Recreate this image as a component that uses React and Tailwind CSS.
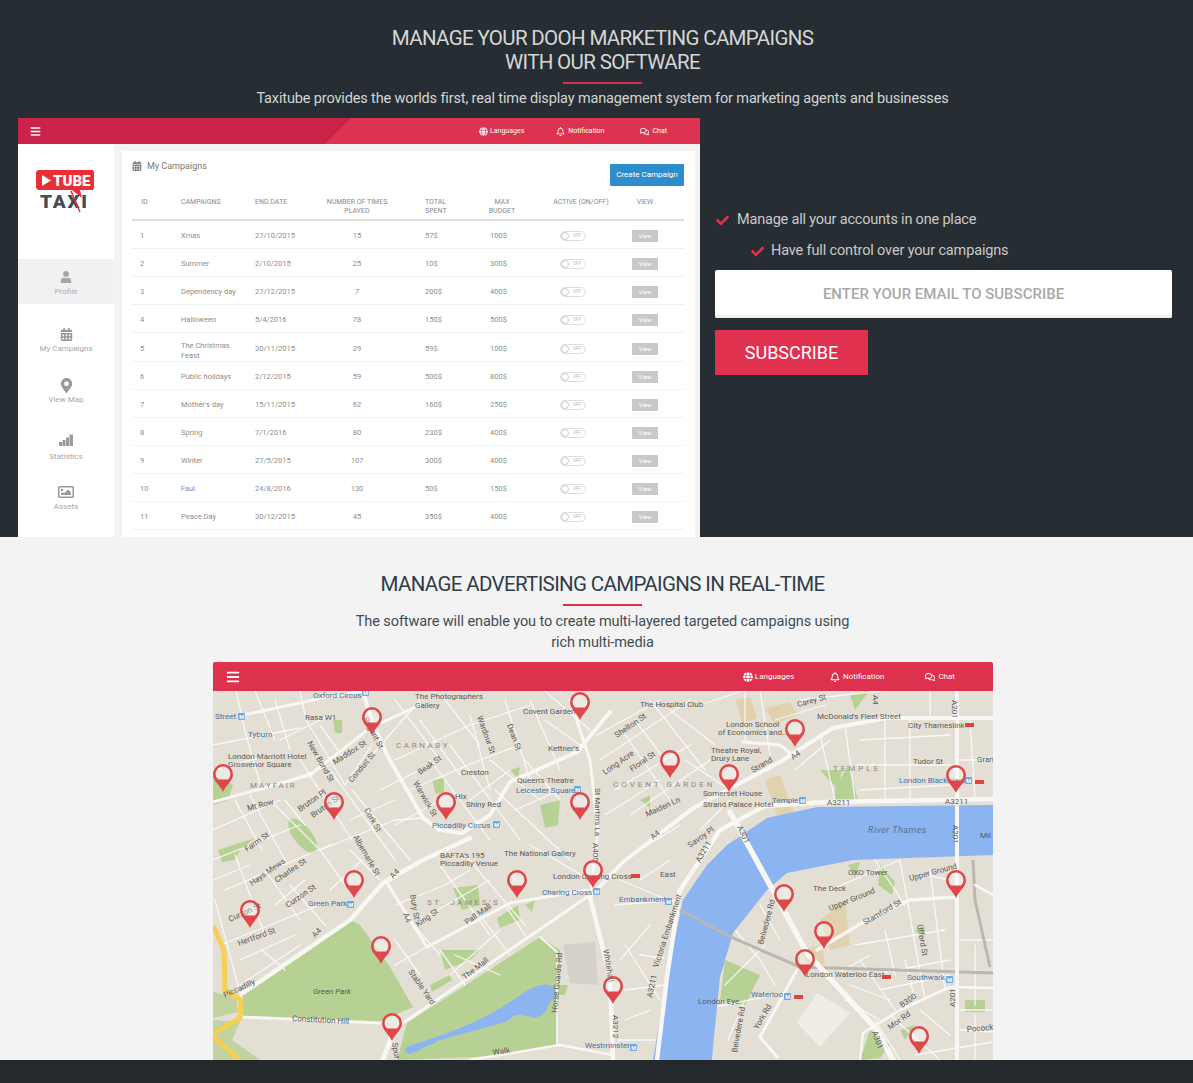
import React from 'react';
import { FaBars, FaGlobe, FaRegBell, FaRegComments, FaCheck, FaUser, FaCalendarAlt, FaMapMarkerAlt, FaRegImage } from 'react-icons/fa';

const rows = [
  ['1', 'Xmas', '27/10/2015', '15', '57$', '100$'],
  ['2', 'Summer', '2/10/2015', '25', '10$', '300$'],
  ['3', 'Dependency day', '27/12/2015', '7', '200$', '400$'],
  ['4', 'Halloween', '5/4/2016', '78', '150$', '500$'],
  ['5', 'The Christmas Feast', '30/11/2015', '29', '59$', '100$'],
  ['6', 'Public holidays', '2/12/2015', '59', '500$', '800$'],
  ['7', "Mother's day", '15/11/2015', '62', '160$', '250$'],
  ['8', 'Spring', '7/1/2016', '80', '230$', '400$'],
  ['9', 'Winter', '27/5/2015', '107', '300$', '400$'],
  ['10', 'Faul', '24/8/2016', '130', '50$', '150$'],
  ['11', 'Peace Day', '30/12/2015', '45', '350$', '400$'],
];

const cols = 'grid grid-cols-[49px_74px_60px_84px_89px_64px_58px_70px]';

const StatsIcon = () => (
  <svg viewBox="0 0 14 12" className="w-[14px] h-[12px]" fill="#9a9a9a">
    <path d="M0 12V8H3V12ZM3.5 12V6H6.500V12ZM7 12V3.500H10V12ZM10.500 12V0.500H14V12Z" />
  </svg>
);

const sideItems = [
  { label: 'My Campaigns', icon: <FaCalendarAlt size={13} className="text-[#9a9a9a]" />, h: 'h-[51px]', gap: 'mt-[2px]' },
  { label: 'View Map', icon: <FaMapMarkerAlt size={15} className="text-[#9a9a9a]" />, h: 'h-[51px]', gap: 'mt-[1px]' },
  { label: 'Statistics', icon: <StatsIcon />, h: 'h-[57px]', gap: 'mt-[5px]' },
  { label: 'Assets', icon: <FaRegImage size={16} className="text-[#9a9a9a]" />, h: 'h-[50px]', gap: 'mt-[1px]' },
];

const pins = [
  [372, 735], [580, 720], [223, 792], [334, 820], [446, 820], [580, 820], [795, 747], [670, 778],
  [729, 792], [956, 793], [593, 888], [354, 898], [517, 898], [250, 928], [381, 964], [392, 1041],
  [613, 1004], [784, 912], [824, 949], [805, 977], [956, 898], [919, 1054],
];

// big roads: path, width
const bigRoads = [
  ['M243 993L350 920L383 883L423 860L470 838', 4.5],
  ['M363 691L370 715L387 755L423 818L440 830L462 833L490 815L510 782L577 752L610 712', 4],
  ['M243 715L323 698L363 691', 3],
  ['M213 802L310 775L370 728L420 705', 3],
  ['M427 947L510 903L587 890', 3],
  ['M387 883L427 947', 3],
  ['M403 1023L587 897', 3],
  ['M240 1017L380 1023', 3],
  ['M590 897L610 977L613 1060', 4.5],
  ['M392 1035L383 1060', 5],
  ['M570 700L590 760L598 830L590 897', 3],
  ['M590 897L623 862L693 808L780 762L833 728L887 718L993 718', 4],
  ['M743 742L780 745L795 757', 3],
  ['M730 812L807 953L877 1030L893 1060', 5.5],
  ['M993 799L827 802L765 806L720 830L680 890L667 977L657 1060', 4.5],
  ['M957 691L957 1060', 4],
  ['M817 950L867 920L910 900L957 897', 3.5],
  ['M797 970L760 1037L777 1057', 3],
  ['M860 1060L863 1033L900 1010L950 987L993 988', 2.5],
  ['M470 1060L560 1045L613 1055', 2.5],
  ['M540 937L557 952L557 1045', 1.8],
  ['M975 885L993 895', 2.5],
];

const streets = [
  'M236 691L246 735L262 790', 'M213 745L300 728', 'M300 691L306 720L345 785', 'M345 785L372 745', 'M270 800L320 850L345 885',
  'M300 760L352 840', 'M330 770L395 860', 'M352 790L410 860', 'M372 755L420 700', 'M395 760L470 725L530 705', 'M410 790L480 760L520 745',
  'M430 760L490 840', 'M450 745L520 840', 'M470 715L490 790', 'M505 700L530 780', 'M530 700L560 770', 'M350 820L395 800', 'M320 850L395 820L425 818',
  'M213 830L280 800', 'M213 860L300 825', 'M225 890L330 845', 'M235 855L265 935', 'M215 900L242 1000', 'M265 870L300 920', 'M220 945L320 905',
  'M290 885L325 925', 'M240 960L295 935', 'M262 950L285 970', 'M395 905L445 885L470 870', 'M420 920L490 880', 'M440 865L490 935', 'M465 855L525 925',
  'M395 965L430 945', 'M440 950L465 985', 'M450 975L500 930', 'M505 905L525 935', 'M530 845L590 880', 'M495 790L570 860', 'M515 810L560 790',
  'M597 735L660 700', 'M600 760L690 700', 'M615 790L690 745', 'M630 815L710 760', 'M650 700L705 770', 'M625 735L670 800', 'M605 815L660 780',
  'M660 835L700 805', 'M640 850L680 825', 'M700 705L745 690', 'M745 740L745 692', 'M760 690L770 755', 'M820 735L835 800', 'M845 725L855 800',
  'M885 720L885 798', 'M910 720L910 798', 'M857 765L950 765', 'M960 760L993 760', 'M970 720L975 800', 'M800 700L880 691', 'M930 691L930 718',
  'M875 860L905 905', 'M900 860L925 1000', 'M930 870L945 990', 'M830 890L900 860', 'M855 945L945 930', 'M870 975L950 960', 'M880 990L950 975', 'M860 960L895 1010',
  'M960 940L993 940', 'M960 1010L993 1010', 'M960 1030L993 1032', 'M975 945L975 1005', 'M745 900L790 870', 'M735 930L760 960L775 985', 'M760 905L780 940',
  'M725 985L765 945', 'M728 1040L745 1000', 'M700 1010L775 995', 'M640 955L664 958', 'M615 905L680 900', 'M620 880L680 905', 'M625 945L660 1000', 'M618 1040L655 1040', 'M625 990L665 985',
  'M890 1015L940 1060', 'M875 1020L900 1060', 'M915 1055L993 1042',
  'M255 691L275 740', 'M275 700L290 750', 'M213 770L270 755', 'M262 790L330 765', 'M280 740L330 715', 'M320 725L345 760', 'M395 700L440 760', 'M420 720L460 775',
  'M445 700L480 745', 'M380 790L430 765', 'M395 825L450 795', 'M470 800L510 770', 'M490 760L540 800', 'M525 760L560 800', 'M545 720L580 745', 'M545 691L590 730',
  'M235 800L262 850', 'M250 795L285 860', 'M213 880L250 865', 'M285 800L305 825', 'M350 850L380 880', 'M330 890L362 860', 'M275 905L305 880', 'M240 985L300 945',
  'M455 955L500 975', 'M480 915L510 955', 'M395 940L420 975', 'M405 915L440 955', 'M635 720L665 760', 'M670 710L715 745', 'M685 760L730 790', 'M700 830L730 800',
  'M775 720L825 705', 'M860 740L950 735', 'M860 790L950 785', 'M795 770L830 740', 'M925 875L950 880', 'M835 975L870 955', 'M850 985L890 1000', 'M845 1000L880 1020', 'M920 1010L950 1035',
  'M975 1015L975 1060', 'M905 960L915 1000', 'M885 930L895 975', 'M625 1020L650 1010', 'M620 960L650 925', 'M640 880L670 860',
];

const labels = [
  ['Oxford Circus', 313, 698, 0, 'b'], ['The Photographers', 415, 699], ['Gallery', 415, 708], ['Covent Garden', 523, 714],
  ['Street', 215, 719, 0, 'b'], ['Rasa W1', 305, 720], ['Tyburn', 248, 737, 0, 'b'], ['London Marriott Hotel', 228, 759], ['Grosvenor Square', 228, 767],
  ['Maddox St', 335, 765, -33], ['Regent St', 363, 719, 62], ['New Bond St', 307, 743, 60], ['Conduit St', 352, 783, -50], ['Beak St', 420, 775, -35],
  ['Warwick St', 413, 783, 60], ['Mt Row', 248, 811, -15], ['Bruton Pl', 300, 812, -35], ['Bruton St', 313, 818, -35], ['Cork St', 364, 810, 60],
  ['Albemarle St', 353, 837, 60], ['Farm St', 247, 852, -35], ['Wardour St', 477, 717, 70], ['Dean St', 507, 725, 70], ["St Martin's La", 595, 788, 90],
  ['A400', 593, 843, 90], ["Kettner's", 548, 751], ['Creston', 461, 775], ["Queen's Theatre", 517, 783], ['Leicester Square', 516, 793, 0, 'b'],
  ['Hix', 455, 799], ['Shiny Red', 466, 807], ['Piccadilly Circus', 432, 828, 0, 'b'], ['The National Gallery', 504, 856], ["BAFTA's 195", 440, 858], ['Piccadilly Venue', 440, 866],
  ['The Hospital Club', 640, 707], ['London School', 726, 727], ['of Economics and...', 718, 735], ["McDonald's Fleet Street", 817, 719], ['City Thameslink', 908, 728],
  ['Theatre Royal,', 711, 753], ['Drury Lane', 711, 761], ['Strand', 753, 773, -30], ['A4', 793, 760, -35], ['Tudor St', 913, 764], ['Gran', 977, 762],
  ['London Blackfriars', 899, 783, 0, 'b'], ['Somerset House', 703, 796], ['Strand Palace Hotel', 703, 807], ['Temple', 772, 803, 0, 'b'], ['A3211', 827, 805], ['A3211', 945, 804],
  ['Long Acre', 605, 775, -35], ['Floral St', 632, 772, -35], ['Shelton St', 617, 738, -35], ['Maiden Ln', 647, 817, -25], ['Savoy Pl', 690, 848, -35], ['A4', 653, 840, -40],
  ['A301', 737, 827, 65], ['A3211', 700, 863, -60], ['A201', 953, 825, 90], ['Mil', 980, 838], ['Carey St', 798, 707, -15], ['A4', 873, 695, 90], ['A201', 952, 700, 90],
  ['Green Park', 308, 906, 0, 'b'], ['Charing Cross', 542, 895, 0, 'b'], ['London Charing Cross', 553, 879], ['A4', 315, 938, -45], ['A4', 393, 879, -45], ['Bury St', 410, 895, 80],
  ['A4', 403, 914, 70], ['King St', 418, 927, -35], ['Pall Mall', 467, 925, -35], ['The Mall', 465, 980, -38], ['Horse Guards Rd', 557, 1013, -85], ['Piccadilly', 225, 998, -25],
  ['Constitution Hill', 292, 1021, 3], ['Stable Yard', 408, 972, 55], ['Hertford St', 239, 946, -20], ['Curzon St', 230, 922, -25], ['Spur', 392, 1043, 80], ['Walk', 493, 1055, -8],
  ['Hays Mews', 252, 886, -35], ['Charles St', 277, 883, -35], ['Curzon St', 288, 908, -35], ['Westminster', 585, 1048, 0, 'b'], ['East', 660, 877], ['OXO Tower', 848, 875],
  ['Upper Ground', 910, 881, -15], ['Upper Ground', 830, 911, -22], ['The Deck', 813, 891], ['Embankment', 619, 902, 0, 'b'], ['Victoria Embankment', 658, 968, -72], ['Stamford St', 865, 925, -30],
  ['A3211', 652, 998, -78], ['Whitehall', 603, 950, 80], ['A3212', 613, 1015, 90], ['London Eye', 698, 1004], ['Waterloo', 751, 997, 0, 'b'], ['Belvedere Rd', 763, 945, -75], ['Belvedere Rd', 737, 1053, -80],
  ['York Rd', 758, 1030, -60], ['London Waterloo East', 806, 977], ['Southwark', 907, 980, 0, 'b'], ['B300', 902, 1008, -35], ['A301', 872, 1032, 70], ['Mor Rd', 890, 1030, -35],
  ['A201', 955, 1007, -90], ['Pocock', 967, 1032, -5], ['Ufford St', 917, 925, 80],
];

const tube = [[362, 696], [238, 720], [574, 793], [493, 828], [347, 908], [593, 895], [665, 905], [799, 804], [965, 784], [784, 1000], [946, 983], [630, 1051]];
const rail = [[965, 727], [975, 784], [631, 878], [882, 979], [794, 999]];

const TopBar = ({ className, text, iconSize, gapA, gapB, pad, barSize, barPad }) => (
  <div className={`flex items-center ${className}`}>
    <FaBars size={barSize} className={`text-white ${barPad}`} />
    <div className={`ml-auto flex items-center text-white ${text} ${pad}`}>
      <span className="flex items-center gap-[2px]"><FaGlobe size={iconSize} />Languages</span>
      <span className={`flex items-center gap-[3px] ${gapA}`}><FaRegBell size={iconSize} />Notification</span>
      <span className={`flex items-center gap-[3px] ${gapB}`}><FaRegComments size={iconSize} />Chat</span>
    </div>
  </div>
);

const MapDrawing = () => (
  <svg viewBox="213 691 780 369" className="block w-[780px] h-[369px] font-[family-name:Roboto,sans-serif]">
    <rect x="213" y="691" width="780" height="369" fill="#e4dfd5" />
    {/* tan blocks */}
    <path d="M736 700L750 697L757 718L742 724ZM765 708L790 702L798 714L775 725ZM765 780L780 775L795 815L778 818ZM820 920L845 900L850 945L830 950ZM800 950L822 945L825 965L808 968Z" fill="#e2d1ad" />
    <path d="M797 1023L817 993L850 1013L820 1047Z" fill="#f0ede7" />
    <path d="M563 945L595 942L598 985L570 983Z" fill="#d5d1ca" />
    {/* parks */}
    <path d="M350 920L243 993L243 1017L377 1023L413 1007L390 967L360 925Z" fill="#b7d195" />
    <path d="M407 1023L540 937L560 950L557 1047L477 1057L397 1060Z" fill="#b7d195" />
    <path d="M213 1020L240 1022L232 1040L260 1060L213 1060ZM213 992L236 997L238 1012L213 1018Z" fill="#c0d3a0" />
    <ellipse cx="303" cy="836" rx="9" ry="21" transform="rotate(-38 303 836)" fill="#b7d195" />
    <path d="M218 850L255 838L240 850L235 860L222 862Z M213 775L233 785L228 800L213 805Z M333 720L342 720L342 733L335 733Z M432 780L444 778L444 792L436 794Z M510 770L520 767L518 778ZM540 805L560 800L558 825L545 828Z M453 888L478 885L480 905L462 910Z M497 918L518 905L520 920L500 928Z M525 905L535 900L532 912ZM430 985L450 975L452 980L432 992ZM440 950L480 950L470 960L445 970ZM555 985L568 985L565 995L556 995Z M640 800L650 795L650 808ZM835 790L848 765L858 800L835 805ZM820 770L842 770L838 790ZM850 695L870 690L855 710ZM880 865L895 882L892 895L878 885ZM848 865L860 862L855 878ZM725 960L760 975L745 1005L720 1000ZM870 1030L890 1045L880 1058L860 1060ZM900 1030L915 1025L905 1040ZM965 1000L985 1000L985 1012L965 1012ZM915 930L925 925L923 940Z" fill="#b7d195" />
    <g fill="none" stroke="#fff" strokeLinecap="round" strokeLinejoin="round" opacity="0.8">
      {streets.map((d, i) => <path key={i} d={d} strokeWidth="1.3" />)}
    </g>
    {/* thames */}
    <path d="M993 805L817 807L767 818L727 845L707 865L683 900L667 977L653 1060L712 1060L713 1047L720 977L733 933L767 890L787 873L853 860L993 855Z" fill="#8cb4f0" />
    {/* lake */}
    <path d="M407 1047C440 1035 480 1025 520 995C535 985 550 980 555 990C558 1000 548 1002 548 1006C545 1010 550 1012 535 1018C505 1010 520 1020 495 1025L440 1040L413 1053C404 1056 403 1048 407 1047Z" fill="#8cb4f0" />
    {/* rail lines */}
    <path d="M680 910L733 938L800 967L993 973M973 860L975 900L990 967" fill="none" stroke="#bbb7b0" strokeWidth="3" />
    <g fill="none" stroke="#f8f7f3" strokeLinecap="round" strokeLinejoin="round">
      {bigRoads.map(([d, w], i) => <path key={i} d={d} strokeWidth={w} />)}
    </g>
    {/* yellow motorway bits */}
    <path d="M213 926L224 950L225 990L241 1000L240 1018L213 1034M213 1037L240 1060" fill="none" stroke="#f6cf55" strokeWidth="5" />
    {labels.map(([t, x, y, r, c], i) => (
      <text
        key={i}
        x={x}
        y={y}
        fontSize="8"
        fill={c === 'b' ? '#47709f' : '#5c5a56'}
        transform={r ? `rotate(${r} ${x} ${y})` : undefined}
      >
        {t}
      </text>
    ))}
    <text x="396" y="748" fontSize="8" letterSpacing="2.6" fill="#8e8a84">CARNABY</text>
    <text x="250" y="788" fontSize="8" letterSpacing="2" fill="#8e8a84">MAYFAIR</text>
    <text x="613" y="787" fontSize="8" letterSpacing="3" fill="#8e8a84">COVENT GARDEN</text>
    <text x="833" y="771" fontSize="8" letterSpacing="3" fill="#8e8a84">TEMPLE</text>
    <text x="427" y="905" fontSize="8" letterSpacing="2.6" fill="#8e8a84">ST. JAMES'S</text>
    <text x="868" y="833" fontSize="9" fontStyle="italic" letterSpacing="0.5" fill="#5a6f93">River Thames</text>
    <text x="313" y="994" fontSize="8" fontStyle="italic" fill="#4f5f44">Green Park</text>
    {tube.map(([x, y], i) => (
      <g key={i}>
        <rect x={x} y={y - 7} width="7" height="7" rx="1" fill="#6aa9e8" />
        <text x={x + 1.2} y={y - 1.5} fontSize="5.500" fontWeight="700" fill="#fff">M</text>
      </g>
    ))}
    {rail.map(([x, y], i) => <rect key={i} x={x} y={y - 4} width="9" height="4" fill="#e0443f" />)}
    {pins.map(([x, y], i) => (
      <g key={i} transform={`translate(${x} ${y})`}>
        <circle cx="0" cy="-18" r="7.5" fill="#fff" fillOpacity="0.35" />
        <path
          d="M0 0C-3 -7 -10 -11 -10 -18A10 10 0 1 1 10 -18C10 -11 3 -7 0 0ZM-7.5 -18A7.5 7.5 0 0 0 -5 -12.5L5 -12.5A7.5 7.5 0 0 0 7.5 -18A7.5 7.5 0 0 0 -7.5 -18Z"
          fill="#e0474a"
          fillRule="evenodd"
        />
      </g>
    ))}
  </svg>
);

const MockLogo = () => (
  <svg viewBox="0 0 60 44" className="w-[60px] h-[44px] font-[family-name:Roboto,sans-serif]">
    <path d="M2 0H57L58 2V18L57 20H44L46 28L36 20H2L0 18V2Z" fill="#ea2e33" />
    <path d="M6 5L15 10.500L6 16Z" fill="#fff" />
    <text x="17" y="16" fontSize="15" fontWeight="900" fill="#fff">TUBE</text>
    <text x="4" y="38" fontSize="19" fontWeight="900" letterSpacing="1.8" fill="#454c51">TAXI</text>
    <path d="M35 21L44 42" stroke="#ea2e33" strokeWidth="1.5" />
  </svg>
);

const App = () => (
  <div className="w-[1193px] h-[1083px] overflow-hidden font-[family-name:Roboto,sans-serif]">
    <section className="h-[537px] bg-[#272e33] overflow-hidden">
      <div className="pl-[12px] pt-[26px] text-center">
        <h1 className="text-[20.5px] leading-[24px] text-[#d6d6d6] tracking-[-0.65px]">
          MANAGE YOUR DOOH MARKETING CAMPAIGNS<br />WITH OUR SOFTWARE
        </h1>
        <div className="w-[79px] h-[2px] bg-[#d9304f] mx-auto mt-[8px]" />
        <p className="text-[14.5px] leading-[20px] text-[#d4d4d4] mt-[5px] mb-[-1px] tracking-[-0.14px]">
          Taxitube provides the worlds first, real time display management system for marketing agents and businesses
        </p>
      </div>
      <div className="flex mt-[10px] pl-[18px] gap-[15px]">
        {/* app screenshot */}
        <div className="w-[682px] h-[419px] bg-[#f3f3f3] overflow-hidden shrink-0">
          <TopBar
            className="h-[26px] pt-[1px] bg-[linear-gradient(135deg,#c9234a_47%,#de3350_47%)]"
            text="text-[7px]"
            iconSize={9}
            gapA="ml-[32px]"
            gapB="ml-[36px]"
            pad="pr-[33px]"
            barSize={11}
            barPad="ml-[12px]"
          />
          <div className="flex">
            <aside className="w-[96px] h-[393px] bg-white shrink-0 flex flex-col items-stretch">
              <div className="h-[115px] pt-[26px] flex justify-center">
                <MockLogo />
              </div>
              <div className="h-[45px] bg-[#f1f1f1] flex flex-col items-center justify-end pb-[6px]">
                <FaUser size={12} className="text-[#a6a6a6]" />
                <span className="text-[8px] leading-[12px] text-[#b0b0b0] mt-[3px]">Profile</span>
              </div>
              {sideItems.map(({ label, icon, h, gap }) => (
                <div key={label} className={`${h} flex flex-col items-center justify-end`}>
                  {icon}
                  <span className={`text-[8px] leading-[12px] text-[#a8a8a8] ${gap}`}>{label}</span>
                </div>
              ))}
            </aside>
            <main className="w-[573px] h-[386px] ml-[8px] mt-[7px] bg-white pl-[10px] pr-[11px] overflow-hidden shrink-0">
              <div className="h-[46px] flex items-start justify-between">
                <div className="flex items-center gap-[5px] mt-[9px] text-[9px] leading-[12px] text-[#777]">
                  <FaCalendarAlt size={10} className="text-[#888]" />
                  My Campaigns
                </div>
                <button className="w-[74px] h-[22px] mt-[13px] bg-[#2e8ecb] text-white text-[8px] rounded-[1px] shrink-0">
                  Create Campaign
                </button>
              </div>
              <div className={`${cols} h-[24px] pt-[1px] border-b-2 border-[#dedede] text-[7px] leading-[9px] text-[#8a8a8a]`}>
                <span className="pl-[9px]">ID</span>
                <span>CAMPAIGNS</span>
                <span>END DATE</span>
                <span className="text-center">NUMBER OF TIMES<br />PLAYED</span>
                <span className="pl-[26px]">TOTAL<br />SPENT</span>
                <span className="text-center w-[28px]">MAX<br />BUDGET</span>
                <span className="text-center whitespace-nowrap">ACTIVE (ON/OFF)</span>
                <span className="text-center">VIEW</span>
              </div>
              {rows.map((r, i) => (
                <div key={r[0]} className={`${cols} items-center pt-[3px] ${i === 4 ? 'h-[29px]' : 'h-[28px]'} border-b border-[#f2f2f2] text-[7.5px] leading-[10px] text-[#8e8e8e]`}>
                  <span className="pl-[8px]">{r[0]}</span>
                  <span className={i === 4 ? 'pr-[10px] self-start pt-[5px]' : 'pr-[10px]'}>{r[1]}</span>
                  <span>{r[2]}</span>
                  <span className="text-center">{r[3]}</span>
                  <span className="pl-[26px]">{r[4]}</span>
                  <span className="pl-[2px]">{r[5]}</span>
                  <span className="flex pl-[8px]">
                    <span className="w-[26px] h-[10px] rounded-full border border-[#ddd] flex items-center justify-end pr-[4px] text-[4.5px] text-[#bbb] relative">
                      <span className="absolute left-0 w-[8px] h-[8px] rounded-full bg-white border border-[#ccc]" />
                      OFF
                    </span>
                  </span>
                  <span className="flex justify-center">
                    <span className="w-[26px] h-[12px] bg-[#c9c9c9] text-white text-[6px] flex items-center justify-center">View</span>
                  </span>
                </div>
              ))}
            </main>
          </div>
        </div>
        {/* subscribe panel */}
        <div className="w-[457px] pt-[91px]">
          <div className="flex items-center h-[22px] text-[14.5px] tracking-[-0.2px] text-[#c9c9c9]">
            <FaCheck size={13} className="text-[#e0314f] ml-[1px]" />
            <span className="ml-[8px]">Manage all your accounts in one place</span>
          </div>
          <div className="flex items-center h-[22px] mt-[9px] pl-[36px] text-[14.5px] tracking-[-0.15px] text-[#c9c9c9]">
            <FaCheck size={13} className="text-[#e0314f]" />
            <span className="ml-[7px]">Have full control over your campaigns</span>
          </div>
          <div className="h-[48px] mt-[8px] pt-[1px] bg-white rounded-[2px] shadow-[inset_0_-3px_2px_#f1f0ea] flex items-center justify-center text-[15px] font-medium text-[#a9a9a9]">
            ENTER YOUR EMAIL TO SUBSCRIBE
          </div>
          <button className="block w-[153px] h-[45px] mt-[12px] bg-[#e0314f] text-white text-[18px]">
            SUBSCRIBE
          </button>
        </div>
      </div>
    </section>
    <section className="h-[523px] bg-[#f3f3f3] overflow-hidden">
      <div className="pl-[12px] pt-[34px] text-center">
        <h2 className="text-[20.5px] leading-[26px] text-[#2f3d4a] tracking-[-0.65px]">MANAGE ADVERTISING CAMPAIGNS IN REAL-TIME</h2>
        <div className="w-[79px] h-[2px] bg-[#d9304f] mx-auto mt-[7px]" />
        <p className="text-[14.5px] leading-[21px] text-[#414d57] mt-[5px] tracking-[-0.1px]">
          The software will enable you to create multi-layered targeted campaigns using<br />rich multi-media
        </p>
      </div>
      <div className="w-[780px] ml-[213px] mt-[9px]">
        <TopBar
          className="h-[29px] bg-[#dd314e] rounded-t-[2px]"
          text="text-[8px]"
          iconSize={10}
          gapA="ml-[36px]"
          gapB="ml-[41px]"
          pad="pr-[38px]"
          barSize={14}
          barPad="ml-[13px]"
        />
        <MapDrawing />
      </div>
    </section>
    <footer className="h-[23px] bg-[#23292d]" />
  </div>
);

export default App;
